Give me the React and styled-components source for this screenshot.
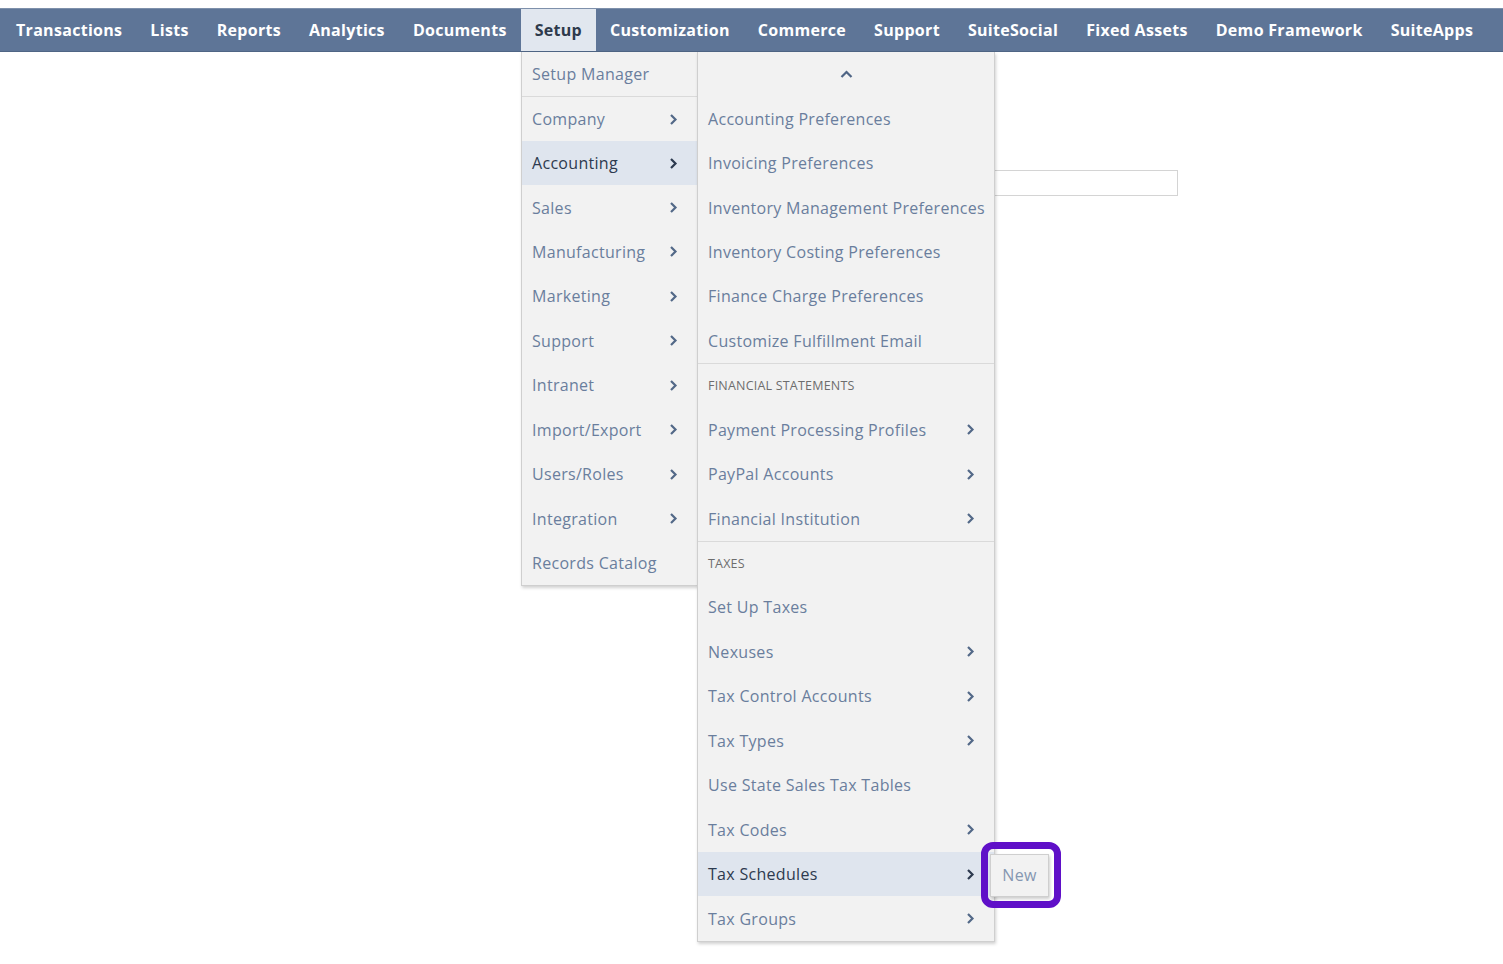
import React from 'react';
import styled, { createGlobalStyle } from 'styled-components';

const GlobalStyle = createGlobalStyle`
  html, body {
    margin: 0;
    padding: 0;
    background: #ffffff;
    font-family: "Open Sans", "Liberation Sans", sans-serif;
  }
`;

const Page = styled.div`
  width: 1503px;
  height: 964px;
  padding-top: 8px;
  box-sizing: border-box;
  overflow: hidden;
`;

const NavBar = styled.nav`
  display: flex;
  height: 44px;
  background: #5e7597;
  border-top: 1px solid #7e90ab;
  border-bottom: 1px solid #4f6585;
  box-sizing: border-box;
  padding-left: 2px;
`;

const NavItem = styled.div`
  display: flex;
  align-items: center;
  padding: 0 14px;
  font-size: 16px;
  font-weight: 700;
  letter-spacing: 0.3px;
  color: ${(p) => (p.$active ? '#2e3a4c' : '#ffffff')};
  background: ${(p) => (p.$active ? '#e1e7ef' : 'transparent')};
  white-space: nowrap;
`;

const Body = styled.div`
  position: relative;
  padding: 118px 0 0 994px;
`;

const Field = styled.div`
  width: 184px;
  height: 26px;
  border: 1px solid #d4d4d4;
  box-sizing: border-box;
  background: #fff;
`;

const Menu = styled.div`
  position: absolute;
  top: 0;
  left: ${(p) => p.$left}px;
  width: ${(p) => p.$width}px;
  background: #f2f2f2;
  border: 1px solid #cfcfcf;
  border-top: none;
  box-sizing: border-box;
  box-shadow: 1px 2px 3px rgba(0, 0, 0, 0.18);
`;

const Row = styled.div`
  display: flex;
  align-items: center;
  justify-content: space-between;
  height: 44.45px;
  box-sizing: border-box;
  padding: 0 19px 0 10px;
  font-size: 16px;
  letter-spacing: 0.3px;
  color: ${(p) => (p.$active ? '#2d3a4f' : '#6a7e9d')};
  background: ${(p) => (p.$active ? '#dfe5ee' : 'transparent')};
  border-top: ${(p) => (p.$sep ? '1px solid #dadada' : 'none')};
  white-space: nowrap;
`;

const Header = styled(Row)`
  font-size: 12.5px;
  color: #6d6d6d;
  letter-spacing: 0.2px;
`;

const CaretRow = styled(Row)`
  justify-content: center;
  padding: 0;
`;

const Highlight = styled.div`
  position: absolute;
  top: 790px;
  left: 981px;
  width: 80px;
  height: 66px;
  border: 7px solid #5f10c8;
  border-radius: 12px;
  box-sizing: border-box;
  display: flex;
  align-items: center;
  justify-content: flex-start;
  padding-left: 2px;
`;

const NewMenu = styled.div`
  width: 59px;
  height: 43px;
  background: #f2f2f2;
  border: 1px solid #cfcfcf;
  box-sizing: border-box;
  box-shadow: 1px 2px 3px rgba(0, 0, 0, 0.2);
  display: flex;
  align-items: center;
  justify-content: center;
  font-size: 16px;
  letter-spacing: 0.3px;
  color: #8597b1;
`;

function Chevron({ dark }) {
  return (
    <svg width="9" height="13" viewBox="0 0 9 13">
      <polyline
        points="2,2 6.5,6.5 2,11"
        fill="none"
        stroke={dark ? '#2d3a4f' : '#536988'}
        strokeWidth="2.2"
      />
    </svg>
  );
}

function CaretUp() {
  return (
    <svg width="13" height="9" viewBox="0 0 13 9">
      <polyline points="1.5,7 6.5,2 11.5,7" fill="none" stroke="#4f6585" strokeWidth="2.2" />
    </svg>
  );
}

const navItems = [
  'Transactions', 'Lists', 'Reports', 'Analytics', 'Documents', 'Setup',
  'Customization', 'Commerce', 'Support', 'SuiteSocial', 'Fixed Assets',
  'Demo Framework', 'SuiteApps',
];

const setupItems = [
  { label: 'Setup Manager' },
  { label: 'Company', sub: true, sep: true },
  { label: 'Accounting', sub: true, active: true },
  { label: 'Sales', sub: true },
  { label: 'Manufacturing', sub: true },
  { label: 'Marketing', sub: true },
  { label: 'Support', sub: true },
  { label: 'Intranet', sub: true },
  { label: 'Import/Export', sub: true },
  { label: 'Users/Roles', sub: true },
  { label: 'Integration', sub: true },
  { label: 'Records Catalog' },
];

const accountingItems = [
  { label: 'Accounting Preferences' },
  { label: 'Invoicing Preferences' },
  { label: 'Inventory Management Preferences' },
  { label: 'Inventory Costing Preferences' },
  { label: 'Finance Charge Preferences' },
  { label: 'Customize Fulfillment Email' },
  { label: 'FINANCIAL STATEMENTS', header: true, sep: true },
  { label: 'Payment Processing Profiles', sub: true },
  { label: 'PayPal Accounts', sub: true },
  { label: 'Financial Institution', sub: true },
  { label: 'TAXES', header: true, sep: true },
  { label: 'Set Up Taxes' },
  { label: 'Nexuses', sub: true },
  { label: 'Tax Control Accounts', sub: true },
  { label: 'Tax Types', sub: true },
  { label: 'Use State Sales Tax Tables' },
  { label: 'Tax Codes', sub: true },
  { label: 'Tax Schedules', sub: true, active: true },
  { label: 'Tax Groups', sub: true },
];

function MenuRows({ items }) {
  return items.map((item) => {
    if (item.header) {
      return <Header key={item.label} $sep={item.sep}>{item.label}</Header>;
    }
    return (
      <Row key={item.label} $active={item.active} $sep={item.sep}>
        <span>{item.label}</span>
        {item.sub && <Chevron dark={item.active} />}
      </Row>
    );
  });
}

export default function App() {
  return (
    <Page>
      <GlobalStyle />
      <NavBar>
        {navItems.map((name) => (
          <NavItem key={name} $active={name === 'Setup'}>{name}</NavItem>
        ))}
      </NavBar>
      <Body>
        <Field />
        <Menu $left={521} $width={177}>
          <MenuRows items={setupItems} />
        </Menu>
        <Menu $left={697} $width={298}>
          <CaretRow><CaretUp /></CaretRow>
          <MenuRows items={accountingItems} />
        </Menu>
        <Highlight>
          <NewMenu>New</NewMenu>
        </Highlight>
      </Body>
    </Page>
  );
}
